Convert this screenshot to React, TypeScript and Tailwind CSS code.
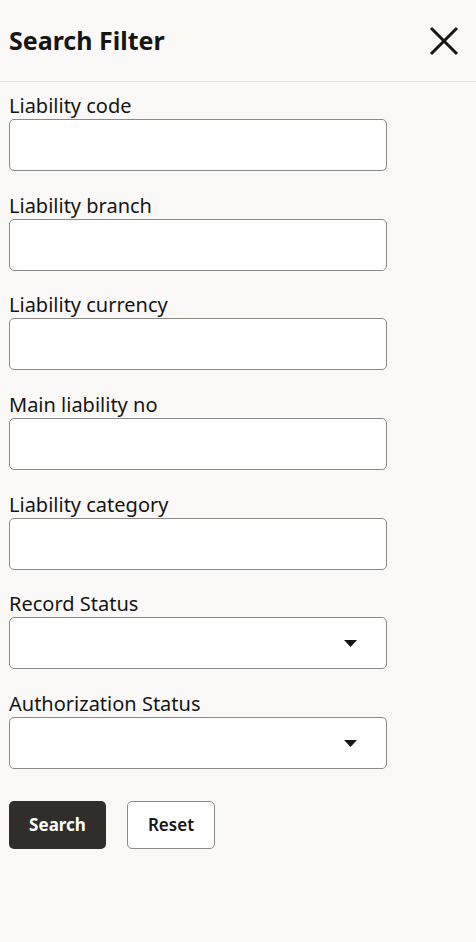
import React from "react";

const fields = [
    { label: "Liability code", type: "text" },
    { label: "Liability branch", type: "text" },
    { label: "Liability currency", type: "text" },
    { label: "Main liability no", type: "text" },
    { label: "Liability category", type: "text" },
    { label: "Record Status", type: "select" },
    { label: "Authorization Status", type: "select" },
];

const App: React.FC = () => {
    return (
        <div
            className="min-h-[942px] w-full bg-[#faf9f8] text-[#161513]"
            style={{ fontFamily: '"Noto Sans", "Open Sans", sans-serif' }}
        >
            <div className="h-[82px] border-b border-[#e1dfdd] flex items-center justify-between pl-[9px] pr-[17px]">
                <h1 className="text-[25px] font-bold leading-none">Search Filter</h1>
                <button className="w-[30px] h-[30px] flex items-center justify-center">
                    <svg width="30" height="30" viewBox="0 0 30 30">
                        <path d="M2 2 L28 28 M28 2 L2 28" stroke="#161513" strokeWidth="3" />
                    </svg>
                </button>
            </div>

            <div className="pt-[10px] px-[9px]">
                {fields.map((f) => (
                    <div key={f.label} className="mb-[20.7px]">
                        <label className="block text-[20px] leading-[27px] h-[27px]">{f.label}</label>
                        <div className="relative w-[378px] h-[52px] bg-white border border-[#8c8a88] rounded-[5px]">
                            {f.type === "select" && (
                                <svg
                                    className="absolute right-[29px] top-[22px]"
                                    width="13"
                                    height="7"
                                    viewBox="0 0 13 7"
                                >
                                    <path d="M0 0 H13 L6.5 7 Z" fill="#161513" />
                                </svg>
                            )}
                        </div>
                    </div>
                ))}

                <div className="flex gap-[21px] pt-[11px]">
                    <button className="w-[97px] h-[48px] rounded-[5px] bg-[#312d2a] text-white text-[17px] font-bold">
                        Search
                    </button>
                    <button className="w-[88px] h-[48px] rounded-[5px] bg-white border border-[#8c8a88] text-[#161513] text-[17px] font-semibold">
                        Reset
                    </button>
                </div>
            </div>
        </div>
    );
};

export default App;
